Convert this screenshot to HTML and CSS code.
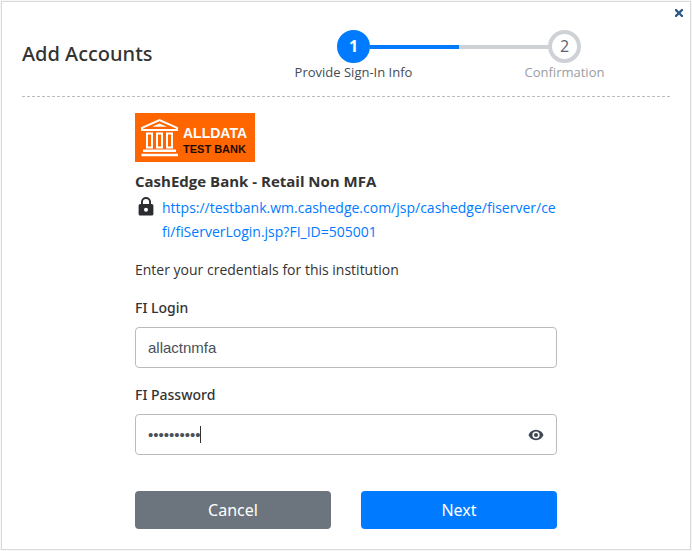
FILE: index.html
```html
<!DOCTYPE html>
<html lang="en">
<head>
<meta charset="utf-8">
<title>Add Accounts</title>
<link rel="stylesheet" href="styles.css">
</head>
<body>
<main class="dialog">
  <button class="close" type="button" aria-label="Close">
    <svg width="8" height="8" viewBox="0 0 8 8"><path d="M1 1l6 6M7 1L1 7" stroke="#2d5986" stroke-width="2.3" stroke-linecap="square"/></svg>
  </button>
  <header class="header">
    <h1 class="title">Add Accounts</h1>
    <ol class="steps">
      <li class="step step-active">
        <div class="track"><span class="line line-none"></span><span class="circle">1</span><span class="line"></span></div>
        <span class="step-name">Provide Sign-In Info</span>
      </li>
      <li class="step">
        <div class="track"><span class="line"></span><span class="circle">2</span><span class="line line-none"></span></div>
        <span class="step-name">Confirmation</span>
      </li>
    </ol>
  </header>
  <form class="form">
    <svg class="logo" width="120" height="49" viewBox="0 0 120 49" role="img" aria-label="AllData Test Bank">
      <rect width="120" height="49" fill="#ff6600"/>
      <g fill="none" stroke="#fff" stroke-width="2">
        <path d="M7 14.800L24.500 7L42 14.800V17H7z"/>
        <path d="M12 20.500h5v14h-5zM22 20.500h5v14h-5zM32 20.500h5v14h-5z"/>
      </g>
      <path d="M17 13.800l7.500-3.200 7.500 3.200zM8 36.500h33v2.500H8zM6.500 40.700h36.500v2.600h-36.500z" fill="#fff"/>
      <text class="logo-text" x="48" y="25" fill="#fff">ALLDATA</text>
      <text class="logo-text logo-text-small" x="48" y="40" fill="#1c0b00">TEST BANK</text>
    </svg>
    <h2 class="bank">CashEdge Bank - Retail Non MFA</h2>
    <div class="site">
      <svg class="lock" width="16" height="20" viewBox="0 0 16 20"><path fill="#2b2d31" fill-rule="evenodd" d="M3 8V6a5 5 0 0 1 10 0V8h.8a1.600 1.600 0 0 1 1.600 1.600v8.300a1.600 1.600 0 0 1-1.600 1.600H2.200a1.600 1.600 0 0 1-1.600-1.600V9.600A1.600 1.600 0 0 1 2.200 8zM4.900 8h6.200V6a3.100 3.100 0 0 0-6.200 0zM8 11.700a2 2 0 1 0 0 4 2 2 0 0 0 0-4z"/></svg>
      <a class="site-link" href="#">https://testbank.wm.cashedge.com/jsp/cashedge/fiserver/cefi/fiServerLogin.jsp?FI_ID=505001</a>
    </div>
    <p class="hint">Enter your credentials for this institution</p>
    <label class="label" for="login">FI Login</label>
    <div class="field"><input class="input" id="login" type="text" value="allactnmfa"></div>
    <label class="label" for="password">FI Password</label>
    <div class="field">
      <input class="input" id="password" type="password" value="cashedge01">
      <span class="caret"></span>
      <button class="reveal" type="button" aria-label="Show password">
        <svg width="16" height="12" viewBox="0 0 16 12"><path fill="#3f4752" fill-rule="evenodd" d="M8 .8C4.500.8 1.700 3 .5 6c1.200 3 4 5.200 7.500 5.200s6.300-2.200 7.500-5.200C14.300 3 11.500.8 8 .8zM8 2.400a3.600 3.600 0 1 1 0 7.200 3.600 3.600 0 0 1 0-7.200z"/><circle cx="8" cy="6" r="2.100" fill="#3f4752"/></svg>
      </button>
    </div>
    <div class="actions">
      <button class="button button-cancel" type="button">Cancel</button>
      <button class="button button-next" type="submit">Next</button>
    </div>
  </form>
</main>
</body>
</html>
```
FILE: styles.css
```css
* {
  box-sizing: border-box;
}

body {
  margin: 0;
  padding: 1px;
  background: #f7f7f7;
  color: #333;
  font-family: "Noto Sans", "Open Sans", sans-serif;
  font-size: 14px;
  line-height: 20px;
}

.dialog {
  position: relative;
  padding: 28px 20px 20px;
  border: 1px solid #dadada;
  background: #fff;
}

.close {
  position: absolute;
  top: 7px;
  right: 7px;
  display: flex;
  padding: 0;
  border: 0;
  background: none;
}

.header {
  display: flex;
  justify-content: space-between;
  padding-bottom: 15px;
  border-bottom: 1px dashed #bbb;
}

.title {
  margin: 10px 0 0;
  font-size: 20px;
  line-height: 28px;
  font-weight: 500;
}

.steps {
  display: flex;
  flex: 0 1 422px;
  margin: 0;
  padding: 0;
  list-style: none;
}

.step {
  flex: 1;
  color: #999da3;
  font-family: "Open Sans", sans-serif;
  font-size: 13px;
  line-height: 18px;
  text-align: center;
}

.step-active {
  color: #444b55;
}

.step-name {
  display: block;
}

.track {
  display: flex;
  align-items: center;
}

.line {
  flex: 1;
  height: 4px;
  background: #ced1d6;
}

.step-active .line {
  background: #007bff;
}

.track .line-none {
  background: none;
}

.circle {
  width: 33px;
  height: 33px;
  border: 4px solid #ced1d6;
  border-radius: 50%;
  color: #5a6270;
  font-size: 16px;
  line-height: 25px;
}

.step-active .circle {
  border-color: #007bff;
  background: #007bff;
  color: #fff;
  font-weight: 700;
}

.form {
  max-width: 422px;
  margin: 16px auto 0;
}

.logo {
  display: block;
}

.logo-text {
  font-family: "Liberation Sans", sans-serif;
  font-size: 14px;
  font-weight: 700;
}

.logo-text-small {
  font-size: 11px;
}

.bank {
  margin: 8px 0 4px;
  font-family: "Open Sans", sans-serif;
  font-size: 15px;
  line-height: 22px;
  font-weight: 700;
}

.site {
  display: flex;
  gap: 8px;
  padding-left: 3px;
}

.lock {
  flex: none;
}

.site-link {
  flex: 1;
  min-width: 0;
  color: #007bff;
  font-family: "Open Sans", sans-serif;
  line-height: 24px;
  text-decoration: none;
  word-break: break-all;
}

.hint {
  margin: 16px 0 18px;
  font-family: "Open Sans", sans-serif;
}

.label {
  display: block;
  margin-bottom: 9px;
  font-weight: 500;
}

.field {
  position: relative;
  margin-bottom: 17px;
}

.input {
  display: block;
  width: 100%;
  height: 41px;
  padding: 0 40px 0 12px;
  border: 1px solid #bbb;
  border-radius: 4px;
  background: #fff;
  color: #495057;
  font-family: "Liberation Sans", sans-serif;
  font-size: 15px;
}

.caret {
  position: absolute;
  top: 12px;
  left: 65px;
  width: 1px;
  height: 17px;
  background: #333;
}

.reveal {
  position: absolute;
  top: 15px;
  right: 13px;
  display: flex;
  padding: 0;
  border: 0;
  background: none;
}

.actions {
  display: flex;
  gap: 30px;
  margin-top: 36px;
}

.button {
  flex: 1;
  height: 38px;
  border: 0;
  border-radius: 4px;
  color: #fff;
  font-family: "Noto Sans", sans-serif;
  font-size: 16px;
}

.button-cancel {
  background: #6c757d;
}

.button-next {
  background: #007bff;
}
```
